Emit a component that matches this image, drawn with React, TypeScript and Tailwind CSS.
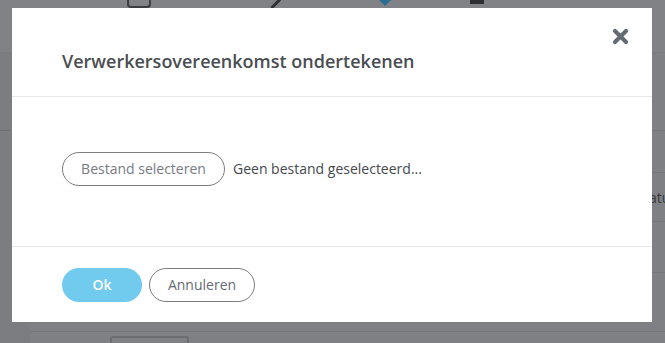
export default function App() {
  return (
    <div className="relative w-[665px] h-[343px] overflow-hidden bg-[#7f8084] font-['Open_Sans',sans-serif]">
      {/* dimmed page behind the dialog */}
      <div className="flex flex-col h-full">
        <div className="h-[53px] shrink-0 bg-[#818286] border-b border-[#7b7c80] flex items-start">
          <div className="ml-[127px] w-[24px] h-[8px] border-2 border-t-0 border-[#3c3d40] rounded-b-sm" />
          <div className="ml-[117px] mt-[-2px] w-[12px] h-[8px] border-b-[3px] border-[#2f3033] -rotate-45" />
          <div className="ml-[100px] mt-[-6px] w-[10px] h-[10px] bg-[#2a6e93] rotate-45" />
          <div className="ml-[80px] w-[14px] h-[4px] bg-[#2d2e31]" />
        </div>
        <div className="flex flex-1 min-h-0">
          <div className="w-[30px] shrink-0 bg-[#7c7d81] flex flex-col">
            <div className="h-[77px] shrink-0" />
            <div className="h-px w-[10px] shrink-0 bg-[#6e6f73]" />
          </div>
          <div className="flex-1 flex flex-col">
            <div className="h-[77px] shrink-0" />
            <div className="h-px shrink-0 bg-[#76777b]" />
            <div className="h-[41px] shrink-0" />
            <div className="h-px shrink-0 bg-[#76777b]" />
            <div className="h-[48px] shrink-0 flex items-center justify-end text-[14px] text-[#38393c]">
              <span className="mr-[-12px]">Status</span>
            </div>
            <div className="h-px shrink-0 bg-[#76777b]" />
            <div className="h-[50px] shrink-0" />
            <div className="h-px shrink-0 bg-[#76777b]" />
            <div className="h-[58px] shrink-0" />
            <div className="h-px shrink-0 bg-[#76777b]" />
            <div className="ml-[80px] mt-[4px] w-[79px] h-[20px] shrink-0 border-2 border-[#6c6d71] rounded-[3px]" />
          </div>
        </div>
      </div>

      {/* dialog */}
      <div className="absolute left-[12px] top-[8px] w-[640px] h-[314px] bg-white flex flex-col">
        <div className="h-[89px] border-b border-[#e8e8e8] flex items-end pb-[26px] pl-[50px]">
          <h2 className="text-[18px] font-semibold text-[#4a4d52] leading-none">
            Verwerkersovereenkomst ondertekenen
          </h2>
        </div>
        <button className="absolute right-[23px] top-[20px] w-[17px] h-[17px]">
          <svg viewBox="0 0 17 17" className="w-[17px] h-[17px]">
            <path d="M3 3 L14 14 M14 3 L3 14" stroke="#646b73" strokeWidth="4.2" strokeLinecap="round" />
          </svg>
        </button>

        <div className="h-[150px] border-b border-[#e8e8e8] flex items-center pl-[50px]">
          <div className="flex items-center gap-[8px] mb-[6px]">
            <button className="w-[163px] h-[34px] rounded-full border border-[#7a7d82] text-[14px] text-[#777b80]">
              Bestand selecteren
            </button>
            <span className="text-[14px] text-[#45484d]">Geen bestand geselecteerd...</span>
          </div>
        </div>

        <div className="flex-1 flex items-center pl-[50px] gap-[7px]">
          <button className="w-[80px] h-[34px] rounded-full bg-[#70cbef] text-white text-[14px] font-semibold">
            Ok
          </button>
          <button className="w-[106px] h-[34px] rounded-full border border-[#7a7d82] text-[14px] text-[#666a70]">
            Annuleren
          </button>
        </div>
      </div>
    </div>
  );
}
